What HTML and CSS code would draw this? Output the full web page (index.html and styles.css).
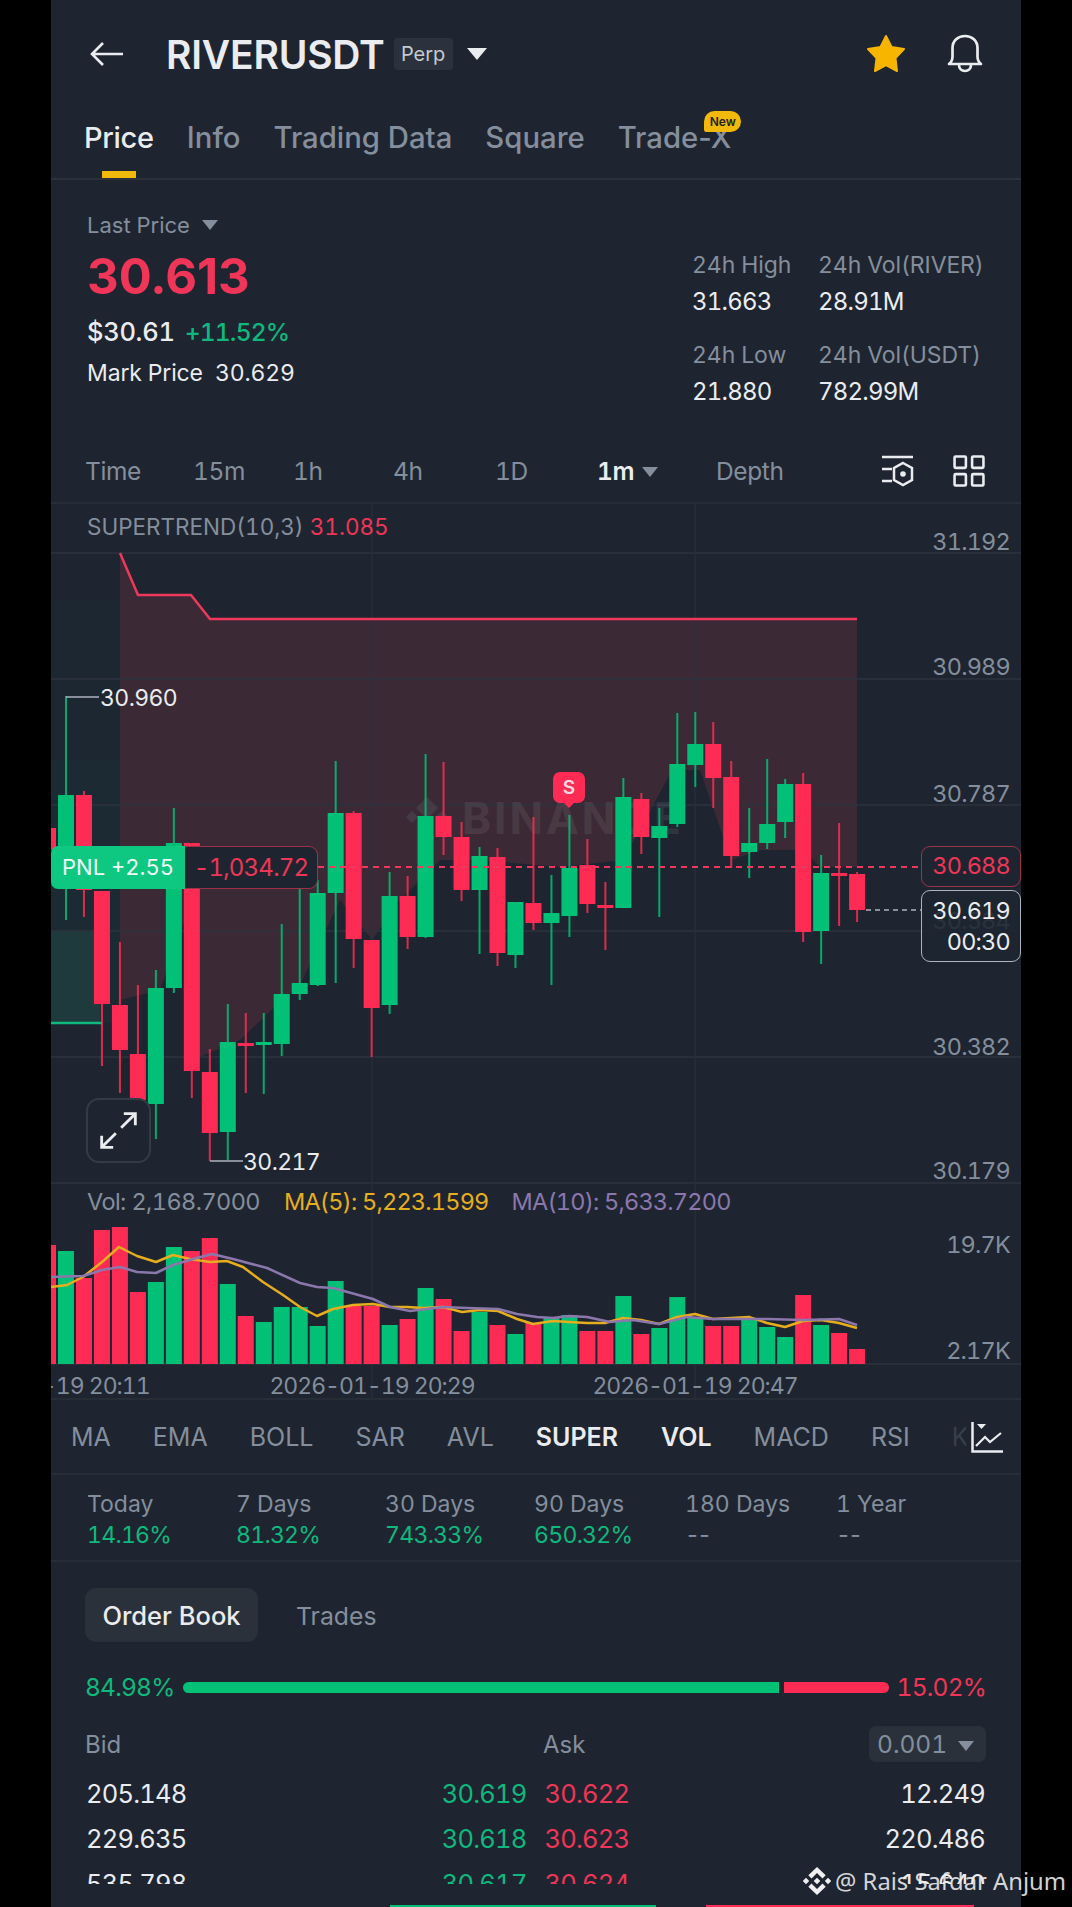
FILE: index.html
```html
<!DOCTYPE html>
<html lang="en">
<head>
    <meta charset="UTF-8">
    <meta name="viewport" content="width=device-width, initial-scale=1.0">
    <title>RIVERUSDT Perp</title>
    <link rel="stylesheet" href="styles.css">
</head>
<body>

<div class="screen">
    <header class="top-bar">
        <svg class="back-icon" viewBox="0 0 34 26"><path d="M33 13H2M13 2 2 13l11 11" fill="none" stroke="#eaecef" stroke-width="2.6"/></svg>
        <span class="symbol">RIVERUSDT</span>
        <span class="perp-tag">Perp</span>
        <span class="caret caret-white"></span>
        <svg class="star-icon" viewBox="0 0 40 40"><polygon points="20,2 25.500,13 38,15 29.500,24 31,37 20,31 9,37 10.500,24 2,15 14.500,13" fill="#f7b500" stroke="#f7b500" stroke-width="2" stroke-linejoin="round"/></svg>
        <svg class="bell-icon" viewBox="0 0 38 40"><path d="M3 30c2-1.500 3.500-4 3.500-7.500V14C6.500 6.500 12 2 19 2s12.500 4.500 12.500 12v8.500c0 3.500 1.500 6 3.500 7.500zM13 31c0 3.500 2.500 6 6 6s6-2.500 6-6" fill="none" stroke="#eaecef" stroke-width="2.700" stroke-linejoin="round"/></svg>
    </header>

    <nav class="tabs">
        <a class="tab tab-active">Price</a>
        <a class="tab">Info</a>
        <a class="tab">Trading Data</a>
        <a class="tab">Square</a>
        <a class="tab tab-new">Trade-X<span class="new-badge">New</span></a>
    </nav>

    <section class="stats">
        <div class="price-col">
            <div class="last-label">Last Price <span class="caret caret-gray"></span></div>
            <div class="last-price">30.613</div>
            <div class="fiat-line">$30.61<span class="green fiat-change">+11.52%</span></div>
            <div class="mark-line">Mark Price&nbsp; 30.629</div>
        </div>
        <div class="stat-grid">
            <div class="stat"><span class="stat-label">24h High</span><span class="stat-value">31.663</span></div>
            <div class="stat"><span class="stat-label">24h Vol(RIVER)</span><span class="stat-value">28.91M</span></div>
            <div class="stat"><span class="stat-label">24h Low</span><span class="stat-value">21.880</span></div>
            <div class="stat"><span class="stat-label">24h Vol(USDT)</span><span class="stat-value">782.99M</span></div>
        </div>
    </section>

    <div class="intervals">
        <span>Time</span>
        <span>15m</span>
        <span>1h</span>
        <span>4h</span>
        <span>1D</span>
        <span class="interval-active">1m <i class="caret caret-gray"></i></span>
        <span>Depth</span>
        <div class="interval-icons">
            <svg class="tool-icon" viewBox="0 0 32 32"><path d="M0 2h31M0 14h10M0 26h10" fill="none" stroke="#eaecef" stroke-width="2.700"/><polygon points="21,8 30,13 30,25 21,30 12,25 12,13" fill="none" stroke="#eaecef" stroke-width="2.500"/><circle cx="21" cy="19" r="2.800" fill="#eaecef"/></svg>
            <svg class="tool-icon" viewBox="0 0 31 31"><g fill="none" stroke="#eaecef" stroke-width="2.500"><rect x="1.500" y="1.500" width="11" height="11" rx="1"/><rect x="18.500" y="1.500" width="11" height="11" rx="1"/><rect x="1.500" y="18.500" width="11" height="11" rx="1"/><rect x="18.500" y="18.500" width="11" height="11" rx="1"/></g></svg>
        </div>
    </div>

    <section class="chart">
        <svg class="chart-svg" id="chartSvg" viewBox="51 504 970 896"></svg>
        <div class="chart-legend legend-top">SUPERTREND(10,3) <span class="red">31.085</span></div>
        <div class="chart-legend legend-vol">Vol: 2,168.7000<span class="ma5">MA(5): 5,223.1599</span><span class="ma10">MA(10): 5,633.7200</span></div>

        <div class="pnl-tag"><span class="pnl-green">PNL +2.55</span><span class="pnl-red">-1,034.72</span></div>
        <div class="axis-box box-entry">30.688</div>
        <div class="axis-box box-last">30.619<br>00:30</div>
        <div class="sell-mark">S</div>
        <button class="expand-btn">
            <svg viewBox="0 0 44 44"><path d="M25 19 41 3M28 3h13v13M19 25 3 41M3 28v13h13" fill="none" stroke="#eaecef" stroke-width="3.200"/></svg>
        </button>
    </section>

    <div class="indicators">
        <span>MA</span>
        <span>EMA</span>
        <span>BOLL</span>
        <span>SAR</span>
        <span>AVL</span>
        <span class="ind-active">SUPER</span>
        <span class="ind-sep"></span>
        <span class="ind-active">VOL</span>
        <span>MACD</span>
        <span>RSI</span>
        <span class="ind-fade">KDJ</span>
        <svg class="ind-icon" viewBox="0 0 32 32"><path d="M1.500 1v29.500H32" fill="none" stroke="#eaecef" stroke-width="2.500"/><path d="M5 25l9-9 5 5 11-9" fill="none" stroke="#eaecef" stroke-width="2.200"/><path d="M6 3h9l-4.500 5z" fill="#eaecef"/></svg>
    </div>

    <div class="periods">
        <div class="period"><span>Today</span><b class="green">14.16%</b></div>
        <div class="period"><span>7 Days</span><b class="green">81.32%</b></div>
        <div class="period"><span>30 Days</span><b class="green">743.33%</b></div>
        <div class="period"><span>90 Days</span><b class="green">650.32%</b></div>
        <div class="period"><span>180 Days</span><b class="no-data">--</b></div>
        <div class="period"><span>1 Year</span><b class="no-data">--</b></div>
    </div>

    <section class="book">
        <div class="book-tabs">
            <span class="book-tab book-tab-active">Order Book</span>
            <span class="book-tab">Trades</span>
        </div>
        <div class="ratio">
            <span class="green">84.98%</span>
            <div class="ratio-bar"><i class="bar-green"></i><i class="bar-red"></i></div>
            <span class="red">15.02%</span>
        </div>
        <div class="book-head">
            <span class="head-bid">Bid</span>
            <span class="head-ask">Ask</span>
            <span class="step-chip">0.001 <i class="caret caret-gray"></i></span>
        </div>
        <div class="book-rows">
            <div class="book-row"><span>205.148</span><span class="green">30.619</span><span class="red">30.622</span><span>12.249</span></div>
            <div class="book-row"><span>229.635</span><span class="green">30.618</span><span class="red">30.623</span><span>220.486</span></div>
            <div class="book-row"><span>535.798</span><span class="green">30.617</span><span class="red">30.624</span><span>15.640</span></div>
        </div>
    </section>

    <div class="buy-sell"><i class="buy"></i><i class="sell"></i></div>
</div>

<div class="watermark">
    <svg viewBox="0 0 28 28"><path d="M14 0l8.700 8.300-3.200 3.200L14 6l-5.500 5.500-3.200-3.200zM14 28l-8.700-8.300 3.200-3.200L14 22l5.500-5.500 3.200 3.200zM14 10.700l3.300 3.300-3.300 3.300-3.300-3.300zM3 10.800l3.200 3.200L3 17.200-.200 14zM25 10.800l3.200 3.200-3.200 3.200-3.200-3.200z" fill="#f0f0f0"/></svg>
    <span>@ Rais Safdar Anjum</span>
</div>

<script src="chart.js"></script>
</body>
</html>
```

FILE: styles.css
```css
* {
    box-sizing: border-box;
}

body {
    margin: 0;
    background-color: #000;
    font-family: Inter, "Noto Sans", sans-serif;
    font-variant-numeric: tabular-nums;
    color: #eaecef;
    height: 1907px;
    overflow: hidden;
    position: relative;
}

.screen {
    width: 970px;
    height: 1907px;
    margin-left: 51px;
    background-color: #1e2530;
    overflow: hidden;
}

.green { color: #0fb87c; }
.red { color: #ef3558; }

.caret {
    display: inline-block;
    width: 0;
    height: 0;
    border-left: 8px solid transparent;
    border-right: 8px solid transparent;
    border-top: 11px solid #848e9c;
}

.caret-white {
    border-left-width: 10px;
    border-right-width: 10px;
    border-top: 12px solid #eaecef;
    margin-left: 14px;
}

.caret-gray {
    border-left-width: 8px;
    border-right-width: 8px;
    border-top: 10px solid #848e9c;
}

/* header */
.top-bar {
    height: 108px;
    display: flex;
    align-items: center;
    padding-left: 39px;
}

.back-icon {
    width: 34px;
    height: 26px;
}

.symbol {
    font-size: 39px;
    font-weight: 600;
    margin-left: 42px;
    letter-spacing: -0.2px;
}

.perp-tag {
    margin-left: 9px;
    background-color: #2b323d;
    border-radius: 4px;
    height: 32px;
    width: 59px;
    text-align: center;
    font-size: 20px;
    line-height: 32px;
    color: #c5cad2;
}

.star-icon {
    width: 40px;
    height: 40px;
    margin-left: auto;
}

.bell-icon {
    width: 38px;
    height: 40px;
    margin-left: 40px;
    margin-right: 37px;
}

/* tabs */
.tabs {
    height: 72px;
    display: flex;
    gap: 33px;
    padding: 13px 0 0 33px;
    border-bottom: 2px solid #2a313b;
    font-variant-numeric: normal;
}

.tab {
    position: relative;
    font-size: 29.300px;
    line-height: 34px;
    font-weight: 500;
    color: #848e9c;
}

.tab-active {
    color: #eaecef;
    font-size: 29px;
    letter-spacing: -0.3px;
}

.tab-active::after {
    content: "";
    position: absolute;
    left: 18px;
    top: 50px;
    width: 34px;
    height: 7px;
    background-color: #f0b90b;
}

.new-badge {
    position: absolute;
    right: -10px;
    top: -10px;
    width: 37px;
    height: 21px;
    border-radius: 11px 11px 11px 3px;
    background-color: #f0b90b;
    color: #1e2329;
    font-size: 12px;
    line-height: 21px;
    font-weight: 600;
    text-align: center;
}

/* stats */
.stats {
    height: 260px;
    display: flex;
    justify-content: space-between;
    padding: 32px 38px 0 36px;
}

.last-label {
    font-size: 22px;
    line-height: 26px;
    color: #848e9c;
}

.last-label .caret {
    margin-left: 6px;
    vertical-align: 3px;
}

.last-price {
    font-size: 49px;
    line-height: 60px;
    font-weight: 700;
    font-variant-numeric: normal;
    color: #ef3558;
    margin-top: 9px;
}

.fiat-line {
    font-size: 25.500px;
    line-height: 30px;
    font-weight: 500;
    letter-spacing: -0.3px;
    margin-top: 10px;
}

.fiat-change {
    font-size: 24.500px;
    letter-spacing: -0.8px;
    margin-left: 10px;
}

.mark-line {
    font-size: 23px;
    line-height: 30px;
    letter-spacing: -0.15px;
    margin-top: 11px;
}

.stat-grid {
    display: grid;
    grid-template-columns: 126px 165px;
    grid-auto-rows: 90px;
    margin-top: 39px;
}

.stat {
    display: flex;
    flex-direction: column;
    gap: 9px;
    white-space: nowrap;
}

.stat-label {
    font-size: 23px;
    line-height: 28px;
    letter-spacing: -0.1px;
    color: #848e9c;
}

.stat-value {
    font-size: 24px;
    line-height: 28px;
    letter-spacing: -0.8px;
}

/* interval row */
.intervals {
    height: 64px;
    display: grid;
    grid-template-columns: 108px 100px 100px 102px 102px 119px 1fr auto;
    align-items: center;
    padding: 0 36px 0 34px;
    border-bottom: 2px solid #262d37;
    font-size: 24.500px;
    letter-spacing: -0.4px;
    color: #848e9c;
}

.interval-active {
    color: #eaecef;
    font-weight: 600;
}

.interval-active .caret {
    margin-left: 2px;
    vertical-align: 3px;
}

.interval-icons {
    display: flex;
    gap: 39px;
}

.tool-icon {
    width: 32px;
    height: 32px;
}

/* chart */
.chart {
    position: relative;
    height: 896px;
    border-bottom: 2px solid #262d37;
}

.chart-svg {
    position: absolute;
    left: 0;
    top: 0;
    width: 970px;
    height: 896px;
}

.chart-legend {
    position: absolute;
    left: 36px;
    line-height: 28px;
    color: #848e9c;
    white-space: nowrap;
}

.legend-top {
    top: 9px;
    font-size: 22.500px;
}

.legend-vol {
    top: 684px;
    font-size: 23.500px;
    letter-spacing: -0.6px;
}

.ma5 { color: #e6ae1f; margin-left: 24px; letter-spacing: -0.8px; }
.ma10 { color: #8b77ac; margin-left: 23px; letter-spacing: -0.8px; }

.pnl-tag {
    position: absolute;
    left: 0;
    top: 342px;
    height: 43px;
    display: flex;
    line-height: 41px;
}

.pnl-green {
    width: 134px;
    background-color: #0ec781;
    color: #f1fbf6;
    border-radius: 7px 0 0 7px;
    text-align: center;
    font-size: 22px;
    line-height: 43px;
}

.pnl-red {
    width: 133px;
    background-color: #1e2530;
    color: #ef3558;
    border: 1.500px solid #9c3347;
    border-left: 0;
    border-radius: 0 9px 9px 0;
    text-align: center;
    font-size: 24px;
    letter-spacing: -0.8px;
}

.axis-box {
    position: absolute;
    right: 0;
    width: 100px;
    border-radius: 9px;
    text-align: right;
    padding-right: 10px;
    font-size: 23.500px;
    letter-spacing: -0.8px;
}

.box-entry {
    top: 342px;
    height: 41px;
    line-height: 38px;
    color: #ef3558;
    border: 1.500px solid #9c3347;
    background-color: #1e2530;
}

.box-last {
    top: 386px;
    height: 72px;
    line-height: 31px;
    padding-top: 4px;
    color: #eaecef;
    border: 1.500px solid #aeb4bd;
    background-color: rgba(30, 37, 48, 0.88);
}

.sell-mark {
    position: absolute;
    left: 502px;
    top: 268px;
    width: 32px;
    height: 31px;
    border-radius: 7px;
    background-color: #fe2c55;
    color: #fbdbe2;
    font-size: 19px;
    font-weight: 600;
    line-height: 31px;
    text-align: center;
}

.sell-mark::after {
    content: "";
    position: absolute;
    left: 10px;
    top: 30px;
    border-left: 6px solid transparent;
    border-right: 6px solid transparent;
    border-top: 6px solid #fe2c55;
}

.expand-btn {
    position: absolute;
    left: 35px;
    top: 594px;
    width: 65px;
    height: 65px;
    padding: 11px;
    border: 2px solid #333b47;
    border-radius: 13px;
    background-color: rgba(30, 37, 48, 0.7);
}

.expand-btn svg {
    display: block;
    width: 100%;
    height: 100%;
}

/* indicator row */
.indicators {
    position: relative;
    height: 75px;
    display: flex;
    align-items: center;
    padding-left: 20px;
    border-bottom: 2px solid #262d37;
    font-size: 25px;
    color: #848e9c;
    overflow: hidden;
    white-space: nowrap;
}

.indicators span {
    margin-right: 42px;
}

.indicators .ind-active {
    color: #eaecef;
    font-weight: 600;
}

.indicators .ind-sep {
    width: 1px;
    height: 34px;
    background-color: #2c333e;
    margin-left: -20px;
    margin-right: 21px;
}

.indicators .ind-fade {
    opacity: 0.25;
}

.ind-icon {
    position: absolute;
    right: 18px;
    top: 21px;
    width: 32px;
    height: 32px;
    box-shadow: -5px 0 0 #1e2530, 20px 0 0 #1e2530;
    background-color: #1e2530;
}

/* period returns */
.periods {
    height: 87px;
    display: grid;
    grid-template-columns: 149px 149px 149px 151px 151px 1fr;
    padding: 15px 0 0 36px;
    border-bottom: 2px solid #262d37;
}

.period {
    display: flex;
    flex-direction: column;
    gap: 2px;
    font-size: 23px;
    line-height: 29px;
    color: #848e9c;
}

.period b {
    font-weight: 400;
    letter-spacing: -0.7px;
}

.period .no-data {
    letter-spacing: -3px;
}

/* order book */
.book {
    height: 343px;
    padding: 26px 35px 0 34px;
}

.book-tabs {
    display: flex;
    align-items: center;
}

.book-tab {
    height: 54px;
    line-height: 56px;
    padding: 0 18px;
    font-size: 24.800px;
    color: #848e9c;
}

.book-tab-active {
    width: 173px;
    padding: 0;
    text-align: center;
    margin-right: 20px;
    background-color: #2a313b;
    border-radius: 11px;
    color: #eaecef;
    font-size: 25.500px;
    font-weight: 500;
}

.ratio {
    display: flex;
    align-items: center;
    justify-content: space-between;
    margin-top: 27px;
    height: 36px;
    font-size: 24.500px;
    letter-spacing: -0.8px;
}

.ratio-bar {
    display: flex;
    gap: 5px;
    width: 706px;
    height: 11px;
}

.bar-green {
    width: 596px;
    background-color: #02c076;
    border-radius: 6px 0 0 6px;
}

.bar-red {
    flex: 1;
    background-color: #fe2c55;
    border-radius: 0 6px 6px 0;
}

.book-head {
    position: relative;
    display: flex;
    align-items: center;
    height: 36px;
    margin-top: 21px;
    font-size: 24px;
    color: #848e9c;
}

.head-bid { width: 458px; }

.step-chip {
    margin-left: auto;
    width: 117px;
    height: 36px;
    line-height: 36px;
    padding-left: 8px;
    background-color: #2a313b;
    border-radius: 7px;
    font-size: 24.500px;
}

.step-chip .caret {
    margin-left: 4px;
    vertical-align: 2px;
}

.book-rows {
    height: 113px;
    margin-top: 9px;
    overflow: hidden;
}

.book-row {
    display: grid;
    grid-template-columns: 1fr 1fr 1fr 1fr;
    height: 45px;
    align-items: center;
    font-size: 25.500px;
    letter-spacing: -0.8px;
    padding: 0 1px 0 1px;
}

.book-row span:nth-child(2) { text-align: right; margin-right: 9px; }
.book-row span:nth-child(3) { margin-left: 9px; }
.book-row span:nth-child(4) { text-align: right; }

.buy-sell {
    display: flex;
    height: 2px;
    margin-left: 339px;
    gap: 50px;
}

.buy {
    width: 266px;
    background-color: #02c076;
}

.sell {
    width: 268px;
    background-color: #fe2c55;
}

/* repost watermark */
.watermark {
    position: absolute;
    left: 803px;
    top: 1867px;
    display: flex;
    align-items: center;
    gap: 4px;
    font-family: "Noto Sans", sans-serif;
    font-size: 23.800px;
    line-height: 28px;
    color: rgba(240, 240, 240, 0.88);
    white-space: nowrap;
}

.watermark svg {
    width: 28px;
    height: 28px;
}
```

FILE: chart.js
```js
// all coordinates below are page pixels, the svg viewBox starts at 51,504
var GREEN = "#02c076";
var RED = "#fe2c55";
var TIGHT = "-0.8";

// colour, body top, body bottom, wick top, wick bottom, volume top
var candles = [
    ["r", 828, 850, 828, 850, 1245],
    ["g", 795, 850, 696, 920, 1251],
    ["r", 795, 890, 791, 917, 1278],
    ["r", 891, 1004, 891, 1066, 1230],
    ["r", 1005, 1050, 942, 1093, 1227],
    ["r", 1054, 1100, 985, 1100, 1292],
    ["g", 988, 1104, 970, 1139, 1282],
    ["g", 843, 988, 808, 993, 1247],
    ["r", 843, 1071, 843, 1098, 1251],
    ["r", 1072, 1133, 1049, 1161, 1238],
    ["g", 1042, 1132, 1004, 1160, 1284],
    ["r", 1043, 1046, 1013, 1093, 1316],
    ["g", 1042, 1045, 1013, 1094, 1322],
    ["g", 994, 1044, 924, 1056, 1307],
    ["g", 983, 994, 888, 1000, 1307],
    ["g", 893, 985, 880, 986, 1326],
    ["g", 813, 893, 761, 983, 1281],
    ["r", 813, 939, 811, 968, 1306],
    ["r", 940, 1008, 940, 1057, 1306],
    ["g", 896, 1005, 872, 1014, 1325],
    ["r", 896, 937, 876, 949, 1319],
    ["g", 816, 937, 754, 938, 1288],
    ["r", 816, 837, 762, 855, 1299],
    ["r", 837, 890, 822, 901, 1331],
    ["g", 856, 890, 847, 954, 1312],
    ["r", 857, 953, 848, 966, 1325],
    ["g", 902, 955, 902, 968, 1334],
    ["r", 903, 923, 817, 930, 1323],
    ["g", 913, 923, 875, 985, 1317],
    ["g", 868, 916, 815, 937, 1315],
    ["r", 865, 904, 839, 913, 1331],
    ["r", 905, 908, 882, 950, 1331],
    ["g", 797, 908, 778, 908, 1296],
    ["r", 799, 837, 793, 854, 1334],
    ["g", 826, 838, 808, 917, 1328],
    ["g", 764, 824, 713, 827, 1297],
    ["g", 744, 765, 712, 787, 1317],
    ["r", 744, 778, 722, 808, 1326],
    ["r", 777, 856, 761, 868, 1326],
    ["g", 843, 852, 808, 878, 1318],
    ["g", 824, 843, 759, 849, 1327],
    ["g", 784, 822, 779, 838, 1337],
    ["r", 784, 932, 773, 942, 1295],
    ["g", 873, 931, 855, 964, 1325],
    ["r", 873, 876, 823, 926, 1333],
    ["r", 874, 910, 872, 922, 1349]
];

var ma5 = "51,1287 67,1285 83,1277 102,1262 119,1247 137,1256 156,1262 173,1255 190,1259 210,1262 227,1261 243,1267 263,1282 283,1295 300,1307 317,1316 333,1309 353,1305 373,1304 390,1307 407,1307 423,1308 443,1307 462,1312 480,1310 498,1311 517,1319 533,1324 553,1321 569,1322 587,1323 605,1323 623,1318 641,1320 659,1324 677,1317 695,1314 713,1319 731,1318 749,1317 767,1323 785,1327 803,1321 821,1320 839,1323 857,1328";
var ma10 = "51,1277 83,1276 102,1270 120,1267 137,1272 156,1273 173,1265 193,1259 212,1254 233,1259 267,1268 300,1283 317,1287 333,1288 373,1299 390,1307 410,1311 443,1307 467,1308 498,1309 517,1314 537,1317 553,1318 569,1316 587,1317 610,1322 633,1320 659,1324 687,1317 713,1319 767,1319 803,1320 839,1319 857,1325";

var svg = document.getElementById("chartSvg");

function add(tag, attrs, text) {
    var el = document.createElementNS("http://www.w3.org/2000/svg", tag);
    for (var key in attrs) {
        el.setAttribute(key, attrs[key]);
    }
    if (text) {
        el.textContent = text;
    }
    svg.appendChild(el);
    return el;
}

// shaded supertrend zones
add("polygon", { points: "51,760 120,760 120,1023 51,1023", fill: "#1c2a34" });
add("polygon", { points: "51,600 120,600 120,760 51,760", fill: "#1d2732" });
add("polygon", { points: "51,931 100,931 100,1023 51,1023", fill: "#1f3a3c" });
add("polygon", {
    points: "120,553 138,595 191,595 210,619 857,619 857,867 820,867 803,850 760,850 731,860 700,770 672,770 640,830 623,860 560,867 480,860 440,860 400,900 372,940 340,900 300,985 282,1000 240,1040 192,1060 192,900 160,990 120,1000",
    fill: "#3b2a35"
});

// grid
[553, 679, 805, 931, 1057, 1183, 1364].forEach(function (y) {
    add("line", { x1: 51, x2: 1021, y1: y, y2: y, stroke: "#2c333e", "stroke-width": 1.5 });
});
[372, 695].forEach(function (x) {
    add("line", { x1: x, x2: x, y1: 504, y2: 1400, stroke: "#2a313c", "stroke-width": 1 });
});

// faint logo behind the candles
add("path", { d: "M427 797l11 11-11 11-11-11zM412 811l6 6-6 6-6-6zM442 811l6 6-6 6-6-6zM427 824l7 7-7 7-7-7z", fill: "#4a3f4b", opacity: 0.8 });
add("text", { x: 462, y: 834, "font-size": 44, "font-weight": 700, "letter-spacing": 3, fill: "#ffffff", opacity: 0.07 }, "BINANCE");

// axis labels
[[31.192, 541], [30.989, 666.5], [30.787, 793], [30.584, 920], [30.382, 1046], [30.179, 1170]].forEach(function (l) {
    add("text", { x: 1010, y: l[1], "text-anchor": "end", "dominant-baseline": "central", "font-size": 23.5, "letter-spacing": TIGHT, fill: "#848e9c" }, l[0].toFixed(3));
});
add("text", { x: 1010, y: 1244, "text-anchor": "end", "dominant-baseline": "central", "font-size": 23.5, "letter-spacing": TIGHT, fill: "#848e9c" }, "19.7K");
add("text", { x: 1010, y: 1350, "text-anchor": "end", "dominant-baseline": "central", "font-size": 23.5, "letter-spacing": TIGHT, fill: "#848e9c" }, "2.17K");

// time axis
[[47, "2026-01-19 20:11"], [372, "2026-01-19 20:29"], [695, "2026-01-19 20:47"]].forEach(function (l) {
    add("text", { x: l[0], y: 1386, "text-anchor": "middle", "dominant-baseline": "central", "font-size": 23, "letter-spacing": "-1", fill: "#848e9c" }, l[1]);
});

// candles and volume bars
candles.forEach(function (c, i) {
    var x = 48 + i * 17.98;
    var col = c[0] == "g" ? GREEN : RED;
    add("rect", { x: x - 1, y: c[3], width: 2, height: c[4] - c[3], fill: col, opacity: 0.85 });
    add("rect", { x: x - 8, y: c[1], width: 16, height: c[2] - c[1], fill: col });
    add("rect", { x: x - 8, y: c[5], width: 16, height: 1364 - c[5], fill: col });
});

// supertrend line
add("polyline", { points: "120,553 138,595 191,595 210,619 857,619", fill: "none", stroke: "#f0385c", "stroke-width": 2.5 });
add("line", { x1: 51, x2: 102, y1: 1023, y2: 1023, stroke: "#0fb87c", "stroke-width": 2.5 });

// moving averages
add("polyline", { points: ma5, fill: "none", stroke: "#e6ae1f", "stroke-width": 2.5, "stroke-linejoin": "round" });
add("polyline", { points: ma10, fill: "none", stroke: "#8b77ac", "stroke-width": 2.5, "stroke-linejoin": "round" });

// high / low marks
add("line", { x1: 66, x2: 99, y1: 697, y2: 697, stroke: "#aeb4bd", "stroke-width": 1.5 });
add("text", { x: 100, y: 698, "dominant-baseline": "central", "font-size": 23, "letter-spacing": "-0.6", fill: "#eaecef" }, "30.960");
add("line", { x1: 210, x2: 243, y1: 1161, y2: 1161, stroke: "#aeb4bd", "stroke-width": 1.5 });
add("text", { x: 243, y: 1162, "dominant-baseline": "central", "font-size": 23, "letter-spacing": "-0.6", fill: "#eaecef" }, "30.217");

// position and last price lines
add("line", { x1: 318, x2: 921, y1: 867, y2: 867, stroke: "#f0385c", "stroke-width": 2, "stroke-dasharray": "6 5" });
add("line", { x1: 866, x2: 921, y1: 910, y2: 910, stroke: "#aeb4bd", "stroke-width": 1.5, "stroke-dasharray": "5 4" });
```
